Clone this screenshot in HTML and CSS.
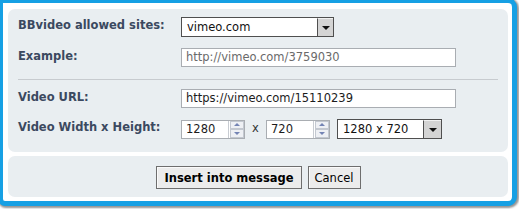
FILE: index.html
```html
<!DOCTYPE html>
<html>
<head>
<meta charset="utf-8">
<link rel="stylesheet" href="styles.css">
</head>
<body>
<div class="dialog">
  <div class="panel main">
    <div class="row">
      <div class="label">BBvideo allowed sites:</div>
      <div class="select site"><span class="val">vimeo.com</span><span class="arrow"><i></i></span></div>
    </div>
    <div class="row r-example">
      <div class="label">Example:</div>
      <div class="input example">http://vimeo.com/3759030</div>
    </div>
    <div class="sep"></div>
    <div class="row r-url">
      <div class="label">Video URL:</div>
      <div class="input url">https://vimeo.com/15110239</div>
    </div>
    <div class="row r-dims">
      <div class="label">Video Width x Height:</div>
      <div class="dims">
        <div class="num"><span class="val">1280</span><span class="spin"><i class="up"></i><i class="down"></i></span></div>
        <span class="times">x</span>
        <div class="num"><span class="val">720</span><span class="spin"><i class="up"></i><i class="down"></i></span></div>
        <div class="select size"><span class="val">1280 x 720</span><span class="arrow"><i></i></span></div>
      </div>
    </div>
  </div>
  <div class="panel foot">
    <button class="btn primary">Insert into message</button>
    <button class="btn">Cancel</button>
  </div>
</div>
</body>
</html>
```
FILE: styles.css
```css
html, body {
  margin: 0;
  padding: 0;
  background: #ffffff;
  overflow: hidden;
}
body {
  width: 519px;
  height: 209px;
  font-family: "DejaVu Sans", Verdana, sans-serif;
  font-size: 11.5px;
}
.dialog {
  box-sizing: border-box;
  width: 519px;
  height: 208px;
  margin: -2px 0 0 -2px;
  border: 5px solid #16a0e4;
  border-radius: 0 9px 9px 7px;
  background: #ffffff;
  padding: 6px 4px 4px 5px;
  display: flex;
  flex-direction: column;
  gap: 4px;
  box-shadow: 1px 1px 2px 1px rgba(60, 60, 60, 0.55);
}
.panel {
  background: #e9eef1;
  border-radius: 7px;
  box-sizing: border-box;
}
.main {
  height: 143px;
  padding: 8px 10px 0 10px;
}
.foot {
  flex: 1;
  display: flex;
  justify-content: center;
  align-items: flex-start;
  gap: 6px;
  padding-top: 10px;
  padding-left: 1px;
}
.row {
  display: grid;
  grid-template-columns: 163px auto;
  align-items: center;
}
.r-example { margin-top: 11px; }
.r-url { margin-top: 9px; }
.r-dims { margin-top: 11px; }
.label {
  font-weight: bold;
  color: #3b4960;
  margin-top: -4px;
  white-space: nowrap;
}
.sep {
  height: 1px;
  background: #c7cbcf;
  margin-top: 12px;
}
.select {
  box-sizing: border-box;
  height: 20px;
  border: 1px solid #4f4f4f;
  background: #ffffff;
  display: flex;
  align-items: center;
  color: #111;
}
.select .val {
  flex: 1;
  padding-left: 5px;
  white-space: nowrap;
}
.select .arrow {
  width: 16px;
  height: 18px;
  box-sizing: border-box;
  background: #d4d4d4;
  border-left: 1px solid #4f4f4f;
  border-top: 1px solid #f2f2f2;
  display: flex;
  align-items: center;
  justify-content: center;
}
.select .arrow i {
  display: block;
  width: 0;
  height: 0;
  border-left: 4px solid transparent;
  border-right: 4px solid transparent;
  border-top: 4px solid #111;
  margin-top: 1px;
}
.site { width: 153px; }
.size { width: 105px; }
.size .arrow { width: 18px; }
.input {
  box-sizing: border-box;
  width: 275px;
  height: 19px;
  border: 1px solid #a9adb2;
  background: #ffffff;
  padding-left: 4px;
  line-height: 17px;
  white-space: nowrap;
}
.example { color: #6a6a6a; }
.url { color: #1c1c1c; }
.dims {
  display: flex;
  align-items: center;
  height: 20px;
}
.num {
  box-sizing: border-box;
  width: 64px;
  height: 19px;
  border: 1px solid #a9adb2;
  background: #ffffff;
  display: flex;
  align-items: stretch;
  color: #1c1c1c;
}
.num .val {
  flex: 1;
  padding-left: 4px;
  line-height: 17px;
}
.spin {
  width: 15px;
  display: flex;
  flex-direction: column;
  border-left: 1px solid #c8ccd2;
}
.spin i {
  flex: 1;
  display: flex;
  align-items: center;
  justify-content: center;
  background: #eef0f4;
  border: 1px solid #c3c8d0;
  margin: 0 0 0 1px;
}
.spin i::after {
  content: "";
  display: block;
  width: 0;
  height: 0;
  border-left: 3px solid transparent;
  border-right: 3px solid transparent;
}
.spin .up::after { border-bottom: 3px solid #7484b4; }
.spin .down::after { border-top: 3px solid #7484b4; }
.times {
  width: 21px;
  text-align: center;
  color: #333;
  margin-top: -3px;
}
.size { margin-left: 7px; }
.btn {
  font-family: "DejaVu Sans", Verdana, sans-serif;
  font-size: 11.5px;
  height: 23px;
  box-sizing: border-box;
  border: 1px solid #6e6e6e;
  background: #ececec;
  color: #000;
  padding: 0 6px;
  margin: 0;
  box-shadow: inset 1px 1px 0 #fafafa;
}
.btn.primary {
  font-weight: bold;
  padding: 0 7px;
}
```
